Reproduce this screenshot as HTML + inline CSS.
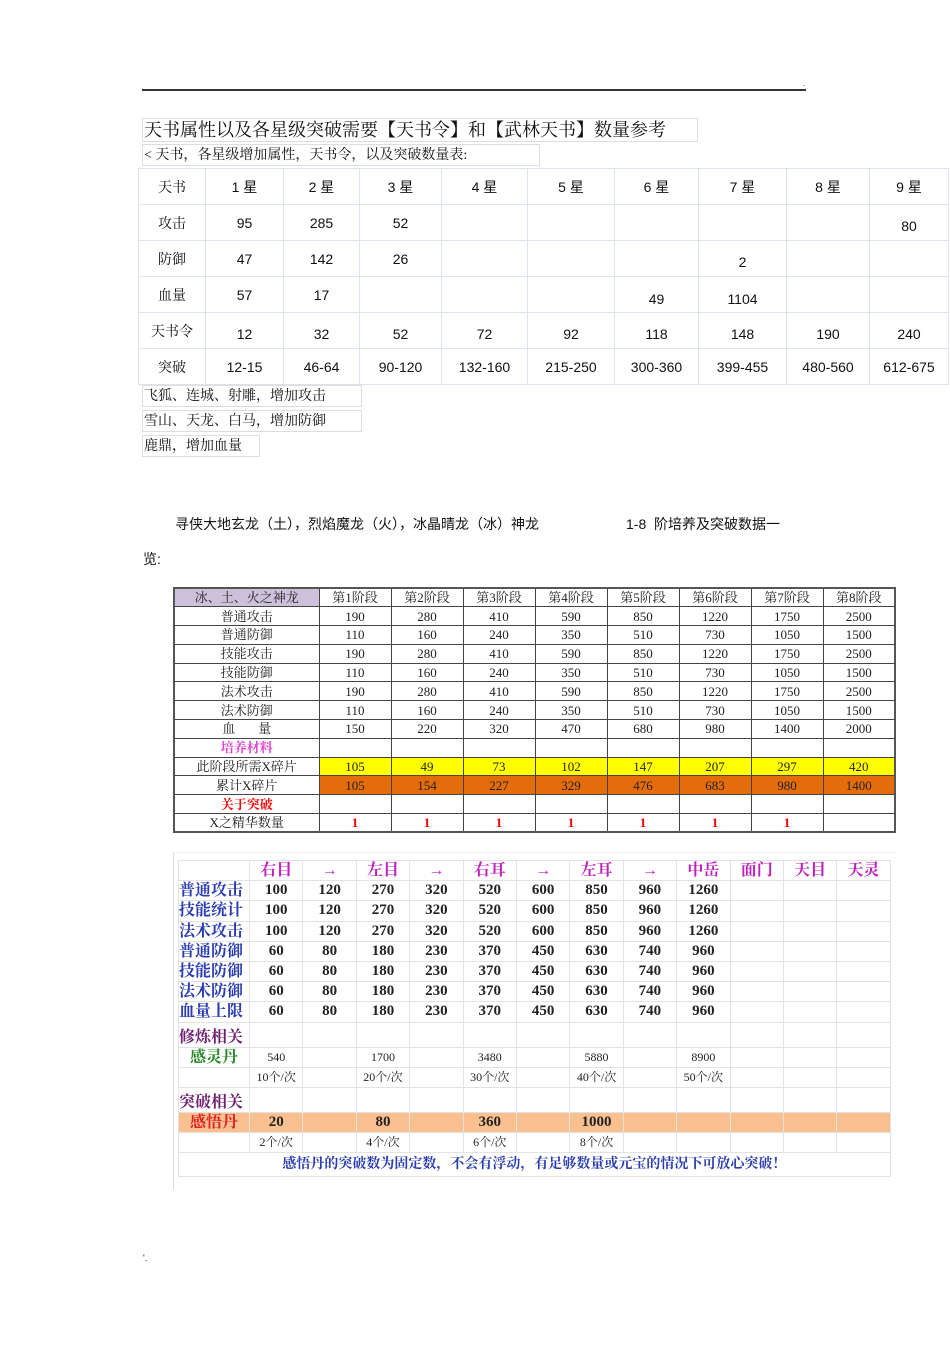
<!DOCTYPE html>
<html><head><meta charset="utf-8">
<style>
*{margin:0;padding:0;box-sizing:border-box}
body{width:950px;height:1345px;background:#fff;position:relative;overflow:hidden;font-family:"Liberation Sans","Noto Sans CJK SC",sans-serif;color:#111}
.a{position:absolute}
.box{position:absolute;border:1px solid #ddd;font-family:"Liberation Serif","Noto Serif CJK SC",serif;white-space:nowrap}
table{border-collapse:collapse;position:absolute;table-layout:fixed}
#t1 td{border:1px solid #dde3ec;text-align:center;font-size:14px;height:36px;vertical-align:middle}
#t1 td:first-child{font-family:"Liberation Serif","Noto Serif CJK SC",serif}
#t2 td{border:1px solid #444;text-align:center;font-size:13px;height:18.8px;line-height:17px;padding:0;font-family:"Liberation Serif","Noto Serif CJK SC",serif;color:#222}
#t3 td{border:1px solid #e2e2e2;text-align:center;font-size:15px;height:20.2px;line-height:19px;padding:0;font-family:"Liberation Serif","Noto Serif CJK SC",serif;font-weight:bold;color:#222}
#t3 .h{color:#c020c0;font-size:16px}
#t3 .b{color:#2a3cb0;text-align:left;font-size:16px}
#t3 .s{font-size:12px;font-weight:normal}
</style></head><body>
<div class="a" style="left:142px;top:89px;width:664px;height:2px;background:#333"></div>
<div class="a" style="left:803px;top:79px;font-size:8px">.</div>

<div class="box" style="left:142px;top:118px;width:556px;height:24px;font-size:18px;line-height:22px;padding-left:1px">天书属性以及各星级突破需要【天书令】和【武林天书】数量参考</div>
<div class="box" style="left:142px;top:144px;width:398px;height:22px;font-size:14px;line-height:21px;padding-left:1px">&lt; 天书，各星级增加属性，天书令，以及突破数量表:</div>

<table id="t1" style="left:138px;top:168px;width:810px;border:1px solid #ccc">
<colgroup><col style="width:67px"><col style="width:78px"><col style="width:76px"><col style="width:82px"><col style="width:86px"><col style="width:87px"><col style="width:84px"><col style="width:88px"><col style="width:83px"><col style="width:79px"></colgroup>
<tr><td>天书</td><td>1 星</td><td>2 星</td><td>3 星</td><td>4 星</td><td>5 星</td><td>6 星</td><td>7 星</td><td>8 星</td><td>9 星</td></tr>
<tr><td>攻击</td><td>95</td><td>285</td><td>52</td><td></td><td></td><td></td><td></td><td></td><td style="padding-top:6px">80</td></tr>
<tr><td>防御</td><td>47</td><td>142</td><td>26</td><td></td><td></td><td></td><td style="padding-top:6px">2</td><td></td><td></td></tr>
<tr><td>血量</td><td>57</td><td>17</td><td></td><td></td><td></td><td style="padding-top:8px">49</td><td style="padding-top:8px">1104</td><td></td><td></td></tr>
<tr><td>天书令</td><td style="padding-top:6px">12</td><td style="padding-top:6px">32</td><td style="padding-top:6px">52</td><td style="padding-top:6px">72</td><td style="padding-top:6px">92</td><td style="padding-top:6px">118</td><td style="padding-top:6px">148</td><td style="padding-top:6px">190</td><td style="padding-top:6px">240</td></tr>
<tr><td>突破</td><td>12-15</td><td>46-64</td><td>90-120</td><td>132-160</td><td>215-250</td><td>300-360</td><td>399-455</td><td>480-560</td><td>612-675</td></tr>
</table>

<div class="box" style="left:142px;top:385px;width:220px;height:22px;font-size:14px;line-height:21px;padding-left:1px">飞狐、连城、射雕，增加攻击</div>
<div class="box" style="left:142px;top:410px;width:220px;height:22px;font-size:14px;line-height:21px;padding-left:1px">雪山、天龙、白马，增加防御</div>
<div class="box" style="left:142px;top:435px;width:118px;height:22px;font-size:14px;line-height:21px;padding-left:1px">鹿鼎，增加血量</div>

<div class="a" style="left:175px;top:514px;font-size:14px">寻侠大地玄龙（土），烈焰魔龙（火），冰晶晴龙（冰）神龙</div>
<div class="a" style="left:626px;top:514px;font-size:14px">1-8 &nbsp;阶培养及突破数据一</div>
<div class="a" style="left:143px;top:549px;font-size:14px">览:</div>

<table id="t2" style="left:173px;top:587px;width:721px;border:2px solid #555">
<colgroup><col style="width:145px"><col span="8" style="width:72px"></colgroup>
<tr><td style="background:#ccc0da">冰、土、火之神龙</td><td>第1阶段</td><td>第2阶段</td><td>第3阶段</td><td>第4阶段</td><td>第5阶段</td><td>第6阶段</td><td>第7阶段</td><td>第8阶段</td></tr>
<tr><td>普通攻击</td><td>190</td><td>280</td><td>410</td><td>590</td><td>850</td><td>1220</td><td>1750</td><td>2500</td></tr>
<tr><td>普通防御</td><td>110</td><td>160</td><td>240</td><td>350</td><td>510</td><td>730</td><td>1050</td><td>1500</td></tr>
<tr><td>技能攻击</td><td>190</td><td>280</td><td>410</td><td>590</td><td>850</td><td>1220</td><td>1750</td><td>2500</td></tr>
<tr><td>技能防御</td><td>110</td><td>160</td><td>240</td><td>350</td><td>510</td><td>730</td><td>1050</td><td>1500</td></tr>
<tr><td>法术攻击</td><td>190</td><td>280</td><td>410</td><td>590</td><td>850</td><td>1220</td><td>1750</td><td>2500</td></tr>
<tr><td>法术防御</td><td>110</td><td>160</td><td>240</td><td>350</td><td>510</td><td>730</td><td>1050</td><td>1500</td></tr>
<tr><td>血 &nbsp; &nbsp; &nbsp; 量</td><td>150</td><td>220</td><td>320</td><td>470</td><td>680</td><td>980</td><td>1400</td><td>2000</td></tr>
<tr><td style="color:#e040d0;font-weight:bold">培养材料</td><td></td><td></td><td></td><td></td><td></td><td></td><td></td><td></td></tr>
<tr style="background:#ffff00"><td style="background:#fff">此阶段所需X碎片</td><td>105</td><td>49</td><td>73</td><td>102</td><td>147</td><td>207</td><td>297</td><td>420</td></tr>
<tr style="background:#e46c0a"><td style="background:#fff">累计X碎片</td><td>105</td><td>154</td><td>227</td><td>329</td><td>476</td><td>683</td><td>980</td><td>1400</td></tr>
<tr><td style="color:#f00;font-weight:bold">关于突破</td><td></td><td></td><td></td><td></td><td></td><td></td><td></td><td></td></tr>
<tr><td>X之精华数量</td><td style="color:#e00;font-weight:bold">1</td><td style="color:#e00;font-weight:bold">1</td><td style="color:#e00;font-weight:bold">1</td><td style="color:#e00;font-weight:bold">1</td><td style="color:#e00;font-weight:bold">1</td><td style="color:#e00;font-weight:bold">1</td><td style="color:#e00;font-weight:bold">1</td><td></td></tr>
</table>

<div class="a" style="left:173px;top:852px;width:723px;height:338px;border-left:1px solid #ddd;border-top:1px solid #eee"></div>
<table id="t3" style="left:178px;top:860px;width:712px">
<colgroup><col style="width:71px"><col span="12" style="width:53.4px"></colgroup>
<tr><td></td><td class="h">右目</td><td class="h">→</td><td class="h">左目</td><td class="h">→</td><td class="h">右耳</td><td class="h">→</td><td class="h">左耳</td><td class="h">→</td><td class="h">中岳</td><td class="h">面门</td><td class="h">天目</td><td class="h">天灵</td></tr>
<tr><td class="b">普通攻击</td><td>100</td><td>120</td><td>270</td><td>320</td><td>520</td><td>600</td><td>850</td><td>960</td><td>1260</td><td></td><td></td><td></td></tr>
<tr><td class="b">技能统计</td><td>100</td><td>120</td><td>270</td><td>320</td><td>520</td><td>600</td><td>850</td><td>960</td><td>1260</td><td></td><td></td><td></td></tr>
<tr><td class="b">法术攻击</td><td>100</td><td>120</td><td>270</td><td>320</td><td>520</td><td>600</td><td>850</td><td>960</td><td>1260</td><td></td><td></td><td></td></tr>
<tr><td class="b">普通防御</td><td>60</td><td>80</td><td>180</td><td>230</td><td>370</td><td>450</td><td>630</td><td>740</td><td>960</td><td></td><td></td><td></td></tr>
<tr><td class="b">技能防御</td><td>60</td><td>80</td><td>180</td><td>230</td><td>370</td><td>450</td><td>630</td><td>740</td><td>960</td><td></td><td></td><td></td></tr>
<tr><td class="b">法术防御</td><td>60</td><td>80</td><td>180</td><td>230</td><td>370</td><td>450</td><td>630</td><td>740</td><td>960</td><td></td><td></td><td></td></tr>
<tr><td class="b">血量上限</td><td>60</td><td>80</td><td>180</td><td>230</td><td>370</td><td>450</td><td>630</td><td>740</td><td>960</td><td></td><td></td><td></td></tr>
<tr><td style="color:#702070;text-align:left;height:25px;vertical-align:bottom;font-size:16px">修炼相关</td><td></td><td></td><td></td><td></td><td></td><td></td><td></td><td></td><td></td><td></td><td></td><td></td></tr>
<tr><td style="color:#2a8a2a;font-size:16px">感灵丹</td><td class="s">540</td><td></td><td class="s">1700</td><td></td><td class="s">3480</td><td></td><td class="s">5880</td><td></td><td class="s">8900</td><td></td><td></td><td></td></tr>
<tr><td></td><td class="s">10个/次</td><td></td><td class="s">20个/次</td><td></td><td class="s">30个/次</td><td></td><td class="s">40个/次</td><td></td><td class="s">50个/次</td><td></td><td></td><td></td></tr>
<tr><td style="color:#702070;text-align:left;height:25px;vertical-align:bottom;font-size:16px">突破相关</td><td></td><td></td><td></td><td></td><td></td><td></td><td></td><td></td><td></td><td></td><td></td><td></td></tr>
<tr style="background:#fac090"><td style="color:#e02020;font-size:16px">感悟丹</td><td>20</td><td></td><td>80</td><td></td><td>360</td><td></td><td>1000</td><td></td><td></td><td></td><td></td><td></td></tr>
<tr><td></td><td class="s">2个/次</td><td></td><td class="s">4个/次</td><td></td><td class="s">6个/次</td><td></td><td class="s">8个/次</td><td></td><td></td><td></td><td></td><td></td></tr>
<tr><td colspan="13" style="color:#2a3cb0;font-size:14px;height:24px">感悟丹的突破数为固定数，不会有浮动，有足够数量或元宝的情况下可放心突破！</td></tr>
</table>

<div class="a" style="left:143px;top:1253px;font-size:9px">'.</div>
</body></html>
